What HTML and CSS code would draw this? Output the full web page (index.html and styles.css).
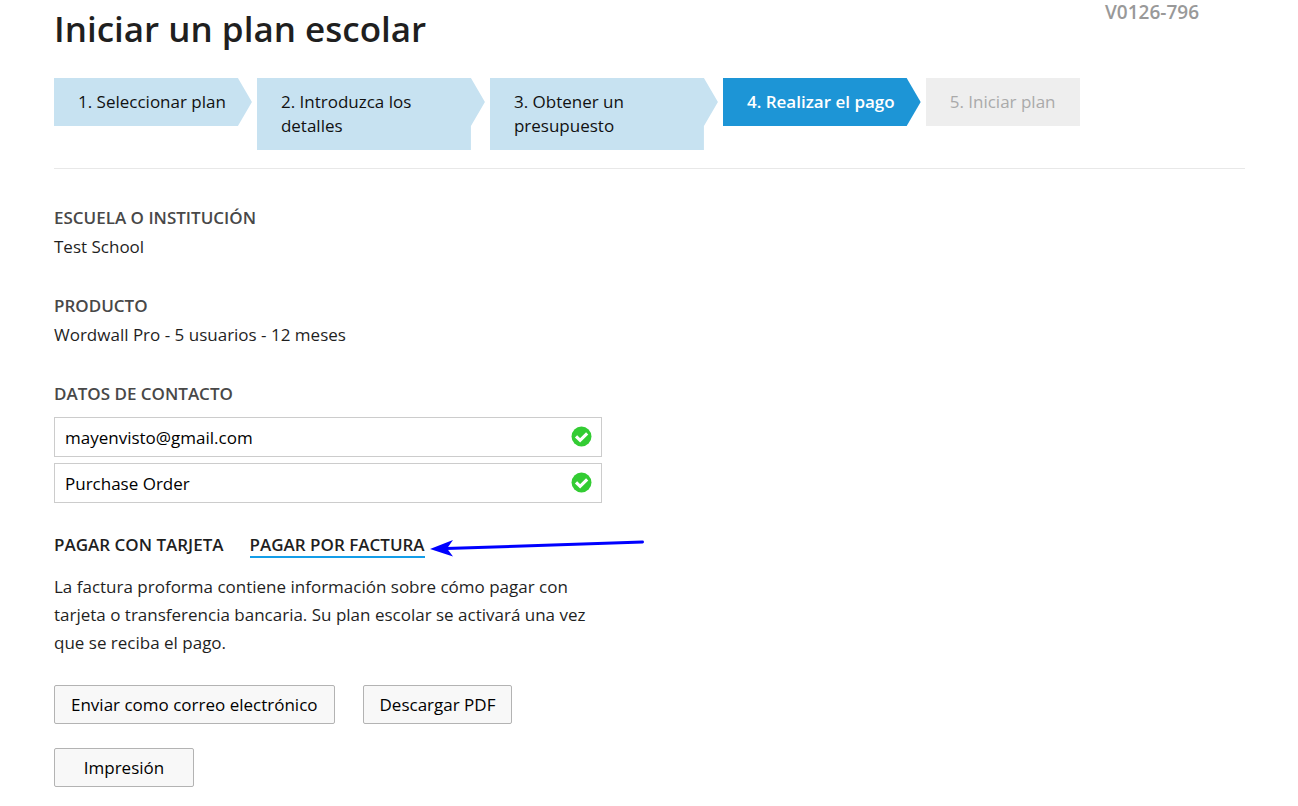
FILE: index.html
```html
<!DOCTYPE html>
<html lang="es">
<head>
<meta charset="utf-8">
<title>Iniciar un plan escolar</title>
<link rel="stylesheet" href="styles.css">
</head>
<body>
<main class="page">
  <header class="header">
    <h1 class="title">Iniciar un plan escolar</h1>
    <span class="reference">V0126-796</span>
  </header>
  <ol class="steps">
    <li class="step done">1. Seleccionar plan</li>
    <li class="step done wide">2. Introduzca los detalles</li>
    <li class="step done wide">3. Obtener un presupuesto</li>
    <li class="step current" aria-current="step">4. Realizar el pago</li>
    <li class="step pending">5. Iniciar plan</li>
  </ol>
  <section class="block">
    <h2 class="label">ESCUELA O INSTITUCIÓN</h2>
    <p class="value">Test School</p>
  </section>
  <section class="block">
    <h2 class="label">PRODUCTO</h2>
    <p class="value">Wordwall Pro - 5 usuarios - 12 meses</p>
  </section>
  <section class="contact">
    <h2 class="label">DATOS DE CONTACTO</h2>
    <div class="field">
      <input class="input" type="email" aria-label="Correo" value="mayenvisto@gmail.com">
      <svg class="check" viewBox="0 0 20 20" aria-hidden="true"><circle cx="10" cy="10" r="9.500"/><path d="M4.8 9.8l3.9 3.9 6.7-6.7"/></svg>
    </div>
    <div class="field">
      <input class="input" type="text" aria-label="Nombre" value="Purchase Order">
      <svg class="check" viewBox="0 0 20 20" aria-hidden="true"><circle cx="10" cy="10" r="9.500"/><path d="M4.8 9.8l3.9 3.9 6.7-6.7"/></svg>
    </div>
  </section>
  <nav class="tabs">
    <a class="tab" href="#tarjeta">PAGAR CON TARJETA</a>
    <a class="tab active" href="#factura">PAGAR POR FACTURA</a>
    <svg class="arrow" viewBox="0 0 216 20" aria-hidden="true"><path class="shaft" d="M16 10.500L212.500 4"/><path class="head" d="M0 11L23 2L17 10.500L23 18.500Z"/></svg>
  </nav>
  <p class="info">La factura proforma contiene información sobre cómo pagar con tarjeta o transferencia bancaria. Su plan escolar se activará una vez que se reciba el pago.</p>
  <div class="actions">
    <button class="button" type="button">Enviar como correo electrónico</button>
    <button class="button" type="button">Descargar PDF</button>
    <button class="button print" type="button">Impresión</button>
  </div>
</main>
</body>
</html>
```
FILE: styles.css
```css
* { box-sizing: border-box; }
body { margin: 0; background: #fff; color: #1f1f1f; font: 17px/28px "Open Sans", sans-serif; }
h1, h2, p, ol { margin: 0; padding: 0; }
.page { padding: 0 53px 20px 54px; }
.header { display: flex; justify-content: space-between; height: 78px; padding-right: 46px; }
.title { font-size: 35px; line-height: 58px; font-weight: 600; }
.reference { color: #999; font-size: 19px; line-height: 24px; font-weight: 600; }
.steps { display: flex; align-items: flex-start; gap: 5px; padding-bottom: 18px; border-bottom: 1px solid #e8e8e8; list-style: none; }
.step { padding: 12px 26px 12px 24px; color: #111; line-height: 24px; white-space: nowrap; clip-path: polygon(0 0, calc(100% - 14px) 0, 100% 24px, calc(100% - 14px) 48px, calc(100% - 14px) 100%, 0 100%); }
.done { background: #c7e2f1; }
.wide { width: 228px; white-space: normal; padding-right: 60px; }
.current { background: #1d95d6; color: #fff; font-weight: 600; }
.pending { background: #eee; color: #aaa; padding-right: 24px; clip-path: none; }
.block { margin-top: 35px; }
.block + .block { margin-top: 30px; }
.label { color: #484848; font-size: 17px; line-height: 28px; font-weight: 600; }
.value { line-height: 30px; }
.contact { display: grid; gap: 6px; width: 548px; max-width: 100%; margin-top: 30px; }
.contact .label { margin-bottom: 3px; }
.field { display: flex; position: relative; }
.input { width: 100%; height: 40px; padding: 0 44px 0 10px; border: 1px solid #ccc; color: #000; font: 17px "Open Sans", sans-serif; }
.check { position: absolute; right: 10px; top: 9px; width: 21px; height: 21px; fill: #3c3; }
.check path { fill: none; stroke: #fff; stroke-width: 3; }
.tabs { display: flex; gap: 26px; position: relative; margin-top: 30px; }
.tab { color: #1f1f1f; line-height: 23px; font-weight: 600; text-decoration: none; border-bottom: 2px solid transparent; }
.active { border-color: #149de8; }
.arrow { position: absolute; left: 376px; top: 5px; width: 216px; height: 20px; }
.shaft { fill: none; stroke: #00f; stroke-width: 3; stroke-linecap: round; }
.head { fill: #00f; }
.info { max-width: 548px; margin-top: 15px; }
.actions { display: flex; flex-wrap: wrap; gap: 24px 28px; max-width: 548px; margin-top: 28px; }
.button { height: 39px; padding: 0 16px; border: 1px solid #b3b3b3; border-radius: 2px; background: #f8f8f8; color: #000; font: 17px "Open Sans", sans-serif; }
.print { min-width: 140px; }
```
